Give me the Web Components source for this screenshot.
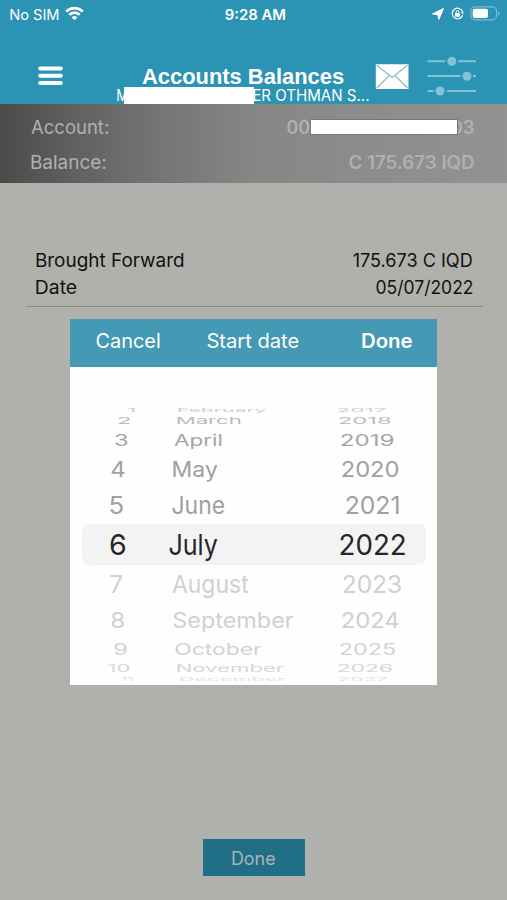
<!DOCTYPE html>
<html lang="en">
<head>
<meta charset="utf-8">
<title>Accounts Balances</title>
<style>
html,body{margin:0;padding:0;height:100%;background:#b0b1ac;font-family:Inter,"Liberation Sans",sans-serif}
</style>
</head>
<body>
<bank-screen></bank-screen>
<script>
const define = (name, html, ready) => {
  const t = document.createElement('template');
  t.innerHTML = html;
  customElements.define(name, class extends HTMLElement {
    constructor() { super(); this.attachShadow({mode:'open'}).appendChild(t.content.cloneNode(true)); }
    connectedCallback() { if (ready) ready(this, this.shadowRoot); }
  });
};
const ctx = document.createElement('canvas').getContext('2d');

/* A label whose visible ink spans its "w" attribute, less half a pixel of antialiasing at each end. */
define('ink-label', `<style>:host{display:block;flex:none;white-space:nowrap}
span{display:block;width:max-content;transform-origin:0 50%}</style><span></span>`, (el, root) => {
  const w = +el.getAttribute('w'), size = +el.getAttribute('size'), weight = el.getAttribute('weight') || 400;
  const face = el.getAttribute('face') || 'Inter', span = root.querySelector('span'), text = el.getAttribute('text');
  const lh = el.getAttribute('lh') || Math.round(size * 1.2);
  span.textContent = text;
  span.style.font = weight + ' ' + size + 'px/' + lh + 'px "' + face + '", sans-serif';
  el.style.width = w + 'px';
  ctx.font = weight + ' 100px "' + face + '", sans-serif';
  const m = ctx.measureText(text), k = span.getBoundingClientRect().width / m.width;
  const left = m.actualBoundingBoxLeft * k, ink = (m.actualBoundingBoxLeft + m.actualBoundingBoxRight) * k;
  const sx = (w - 1.1) / ink;
  span.style.transform = 'translateX(' + (left * sx + .4) + 'px) scaleX(' + sx + ')';
});

define('status-bar', `<style>:host{display:grid;grid-template-columns:1fr auto 1fr;align-items:center;height:28px;padding:0 7px 0 9.5px;color:#fff}
div{display:flex;align-items:center}.r{justify-content:flex-end}svg{display:block}.w{margin-left:6px;margin-top:-2px}.l{margin-right:7px}.o{margin-right:6px;margin-top:-1px}.b{margin-top:-1px}</style>
<div><ink-label text="No SIM" w="49" size="14.4"></ink-label>
<svg class="w" width="19" height="15" viewBox="0 0 19 15" fill="none" stroke="#fff" stroke-width="2.6"><path d="M1.2 5.6C5.8 1 13.2 1 17.8 5.6M4.3 8.8c2.9-2.9 7.5-2.9 10.4 0"/><path d="M9.5 14.2 6.7 11.4a4 4 0 0 1 5.6 0z" fill="#fff" stroke="none"/></svg></div>
<ink-label text="9:28 AM" w="60.5" size="14.4" weight="600"></ink-label>
<div class="r"><svg class="l" width="12" height="12" viewBox="0 0 12 12"><path d="M11.4.5 6.9 11.4 5.7 6.5.5 5.9z" fill="#fff" stroke="#fff" stroke-width="1" stroke-linejoin="round"/></svg>
<svg class="o" width="13" height="13" viewBox="0 0 13 13" fill="none" stroke="#fff" stroke-width="1.3"><path d="M11.6 5A5.3 5.3 0 1 0 11.6 8"/><path d="m10 5.4 1.7 2 1.4-2z" fill="#fff" stroke="none"/><rect x="4" y="6" width="5" height="3.8" rx=".5" fill="#fff" stroke="none"/><path d="M5.1 6V4.9a1.4 1.4 0 0 1 2.8 0V6" stroke-width="1"/></svg>
<svg class="b" width="30" height="15" viewBox="0 0 30 15"><rect x=".9" y=".9" width="25.6" height="13" rx="4" fill="none" stroke="#7fbdd0" stroke-width="1.1"/><rect x="2.7" y="2.8" width="15.3" height="9.2" rx="2" fill="#fff"/><path d="M27.8 5v4.8q1.7-.7 1.7-2.4t-1.7-2.4" fill="#7fbdd0"/></svg></div>`);

define('nav-bar', `<style>:host{display:grid;grid-template-columns:37.5px 27px 52.5px 252px 6px 33px 19px 50px;height:76px;color:#fff}
svg{display:block}.menu{margin-top:37px}.mail{margin-top:35px}.filter{margin-top:26px}
.title{padding:39px 0 0 25px}.sub{display:flex;align-items:flex-start;height:17px}.sub ink-label{margin-top:1px}
.mask{flex:none;width:129.5px;height:17px;background:#fff;margin-left:-4px;margin-right:-1px;z-index:1}</style>
<i></i><svg class="menu" width="25" height="21" viewBox="0 0 25 21" stroke="#fff" stroke-width="4" stroke-linecap="round"><path d="M2.2 3.5h20.6M2.2 10.8h20.6M2.2 18h20.6"/></svg><i></i>
<div><div class="title"><ink-label face="Liberation Sans" text="Accounts Balances" w="202" size="21.8" weight="700" lh="20"></ink-label></div>
<div class="sub"><ink-label text="M" w="11" size="15.4" lh="16"></ink-label><div class="mask"></div><ink-label text="ER OTHMAN S..." w="116" size="15.4" lh="16"></ink-label></div></div><i></i>
<svg class="mail" width="34" height="27" viewBox="0 0 34 27"><path d="M.8 1.2h32.7V26H.8z" fill="#fff"/><path d="m1.8 2.2 15.3 12.3L32.5 2.2M1.8 25l12-12M32.5 25l-12-12" fill="none" stroke="#81bcb9" stroke-width="1.1"/></svg><i></i>
<svg class="filter" width="50" height="42" viewBox="0 0 50 42" stroke="#86c2d6" stroke-width="2"><path d="M.5 7.3h17.8M31.3 7.3H49M.5 22h33M46 22h3M.5 37h6M20 37h29"/><g fill="#86c2d6" stroke="none"><circle cx="24.8" cy="7.3" r="4.5"/><circle cx="40" cy="22.3" r="4.5"/><circle cx="13" cy="37" r="4.5"/></g></svg>`);

define('account-band', `<style>:host{display:block;box-sizing:border-box;height:79px;padding:6px 32.5px 0 31px;color:#b1b0b0;background:linear-gradient(90deg,#4d4b4a 0,#646263 17%,#727171 28%,#7b7b7b 38%,#868685 50%,#8d8d8d 75%,#929292)}
.row{display:flex;align-items:center;justify-content:space-between;height:35px}.num{display:flex;align-items:center}
.mask{box-sizing:border-box;width:148px;height:16px;background:#fff;border:1px solid #777;margin:-2px -7px 0 0;z-index:1}</style>
<div class="row"><ink-label text="Account:" w="77.5" size="18.8"></ink-label><div class="num"><ink-label text="00" w="23" size="18" weight="600"></ink-label><div class="mask"></div><ink-label text="03" w="23.5" size="18" weight="600"></ink-label></div></div>
<div class="row"><ink-label text="Balance:" w="75" size="18.8"></ink-label><ink-label text="C 175.673 IQD" w="125.5" size="18" weight="600"></ink-label></div>`);

define('entry-summary', `<style>:host{display:block;box-sizing:border-box;margin:63px 24.5px 0 25.5px;padding:0 10px 6px 10px;border-bottom:1px solid #8c8b74;height:61px;color:#10110f}
.row{display:flex;justify-content:space-between;align-items:center;height:27px}</style>
<div class="row"><ink-label text="Brought Forward" w="148" size="18.6"></ink-label><ink-label text="175.673 C IQD" w="119.5" size="18.6"></ink-label></div>
<div class="row"><ink-label text="Date" w="41" size="18.6"></ink-label><ink-label text="05/07/2022" w="97" size="18.6"></ink-label></div>`);

/* [row height, cap height, colour, then text / left / width for day, month, year]; lefts are measured from the sheet edge. */
const ROWS = [
  [7.5,3.8,'#cfcfcf','1',56,8,'February',107.5,89,'2017',267,48],
  [13,6.8,'#bababa','2',47.5,12.5,'March',106,64,'2018',268,52],
  [26,11.4,'#a5a5a5','3',44,13,'April',103.5,48,'2019',270.5,53],
  [33,15.2,'#a0a0a0','4',40,14,'May',102,45,'2020',271.5,57],
  [38.5,17.8,'#a0a0a0','5',39,13.5,'June',101,53,'2021',275,53],
  [41,21,'#262626','6',39.5,16,'July',98.5,49,'2022',269,65.5],
  [38.5,17.8,'#d0d0d0','7',39.5,12.5,'August',101,77,'2023',272,58.5],
  [32.5,15.2,'#d0d0d0','8',40.5,13.5,'September',102,121,'2024',271,57],
  [25.5,11.4,'#d2d2d2','9',43.5,13.5,'October',104,87,'2025',269.5,55.5],
  [13,7,'#d6d6d6','10',37.5,22,'November',106.5,107.5,'2026',267.5,54.5],
  [7.5,3.4,'#e2e2e2','11',50,12,'December',109,106,'2027',268,49]
];
define('wheel-row', `<style>:host{display:flex;align-items:center;box-sizing:border-box;padding-top:1px}:host([selected]){padding-top:0;margin:0 11px 0 12px;background:#f3f3f4;border-radius:7px}</style>`, (el, root) => {
  const i = +el.getAttribute('index'), r = ROWS[i], selected = i === 5;
  if (selected) el.setAttribute('selected', '');
  el.style.height = r[0] + 'px'; el.style.color = r[2];
  let x = selected ? 11.5 : -.5;
  for (let c = 3; c < 12; c += 3) {
    const l = document.createElement('ink-label');
    l.setAttribute('text', r[c]); l.setAttribute('w', r[c+2]); l.setAttribute('size', r[1] / .727);
    l.style.marginLeft = (r[c+1] - x) + 'px'; x = r[c+1] + r[c+2];
    root.appendChild(l);
  }
});
define('date-wheel', `<style>:host{display:block;margin-top:39px;overflow:hidden;height:276px}</style>`, (el, root) => {
  ROWS.forEach((r, i) => { const e = document.createElement('wheel-row'); e.setAttribute('index', i); root.appendChild(e); });
});
define('date-sheet', `<style>:host{display:block;box-sizing:border-box;width:367px;height:366px;margin:12px 0 0 70px;background:#fefefe}
header{display:flex;align-items:center;height:48px;padding:0 24.5px 0 25.5px;background:#4499b5;color:#fff;box-sizing:border-box}
header>*{position:relative;top:-2px}.s{margin-left:47.5px}.d{margin-left:auto}</style>
<header><ink-label text="Cancel" w="64" size="20"></ink-label><ink-label class="s" text="Start date" w="92" size="20"></ink-label><ink-label class="d" text="Done" w="50.5" size="19.5" weight="600"></ink-label></header>
<date-wheel></date-wheel>`);
define('done-button', `<style>:host{display:flex;align-items:center;justify-content:center;width:102px;height:37px;margin:154px 0 0 203px;background:#206f87;color:#a5b3b4}</style><ink-label text="Done" w="43.5" size="18.4"></ink-label>`);
define('bank-screen', `<style>:host{display:block;width:507px;height:900px;background:#b0b1ac;overflow:hidden}.top{background:#2b93b3;height:104px}</style>
<div class="top"><status-bar></status-bar><nav-bar></nav-bar></div><account-band></account-band><entry-summary></entry-summary><date-sheet></date-sheet><done-button></done-button>`);
</script>
</body>
</html>
